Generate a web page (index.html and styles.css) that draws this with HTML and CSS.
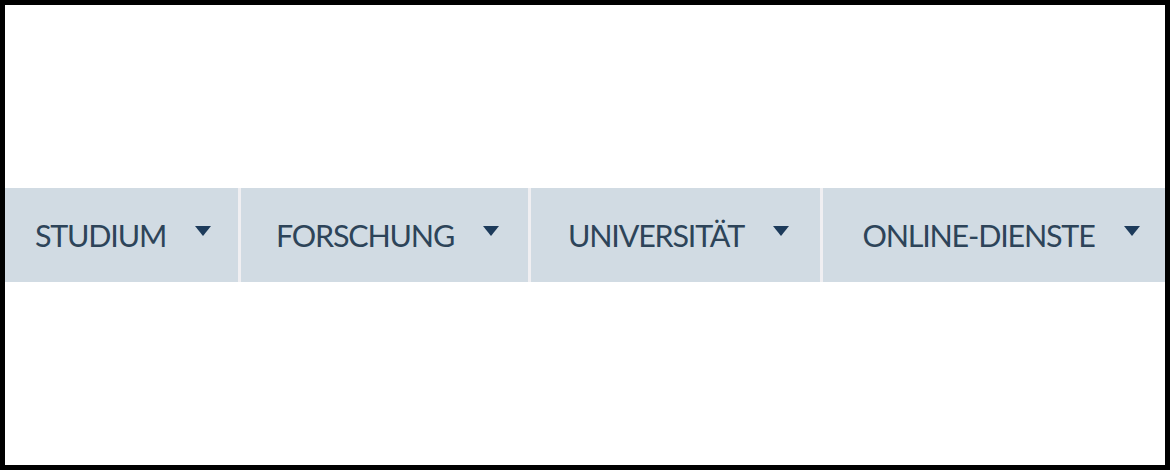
FILE: index.html
```html
<!DOCTYPE html>
<html>
<head>
<meta charset="UTF-8">
<title>Navigation</title>
<link rel="stylesheet" href="styles.css">
</head>
<body>

<div class="frame">
    <ul class="nav">
        <li class="nav-item"><span class="label">STUDIUM</span><i class="caret"></i></li>
        <li class="nav-item"><span class="label">FORSCHUNG</span><i class="caret"></i></li>
        <li class="nav-item"><span class="label">UNIVERSITÄT</span><i class="caret"></i></li>
        <li class="nav-item"><span class="label">ONLINE-DIENSTE</span><i class="caret"></i></li>
    </ul>
</div>

</body>
</html>
```

FILE: styles.css
```css
* {
    margin: 0;
    padding: 0;
    box-sizing: border-box;
}

html, body {
    width: 1170px;
    height: 470px;
    background: #fff;
    overflow: hidden;
}

.frame {
    display: flex;
    align-items: center;
    width: 1170px;
    height: 470px;
    border: 5px solid #000;
    overflow: hidden;
}

.nav {
    display: flex;
    list-style: none;
    height: 94px;
    width: 100%;
    overflow: hidden;
}

.nav-item {
    display: flex;
    align-items: center;
    justify-content: center;
    flex: 0 0 auto;
    gap: 29px;
    padding-left: 6px;
    background: #d1dbe3;
    font-family: "Lato", "Noto Sans", sans-serif;
    font-size: 30.5px;
    letter-spacing: -1.2px;
    color: #2d4459;
}

.nav-item + .nav-item {
    border-left: 3px solid #f0eff2;
}

.nav-item:nth-child(1) {
    width: 233px;
    padding-left: 3px;
}

.nav-item:nth-child(2) {
    width: 290px;
}

.nav-item:nth-child(3) {
    width: 292px;
}

.nav-item:nth-child(4) {
    width: 353px;
}

.caret {
    display: block;
    width: 0;
    height: 0;
    margin-bottom: 9px;
    border-left: 8.5px solid transparent;
    border-right: 8.5px solid transparent;
    border-top: 10px solid #1d3b5b;
}
```
